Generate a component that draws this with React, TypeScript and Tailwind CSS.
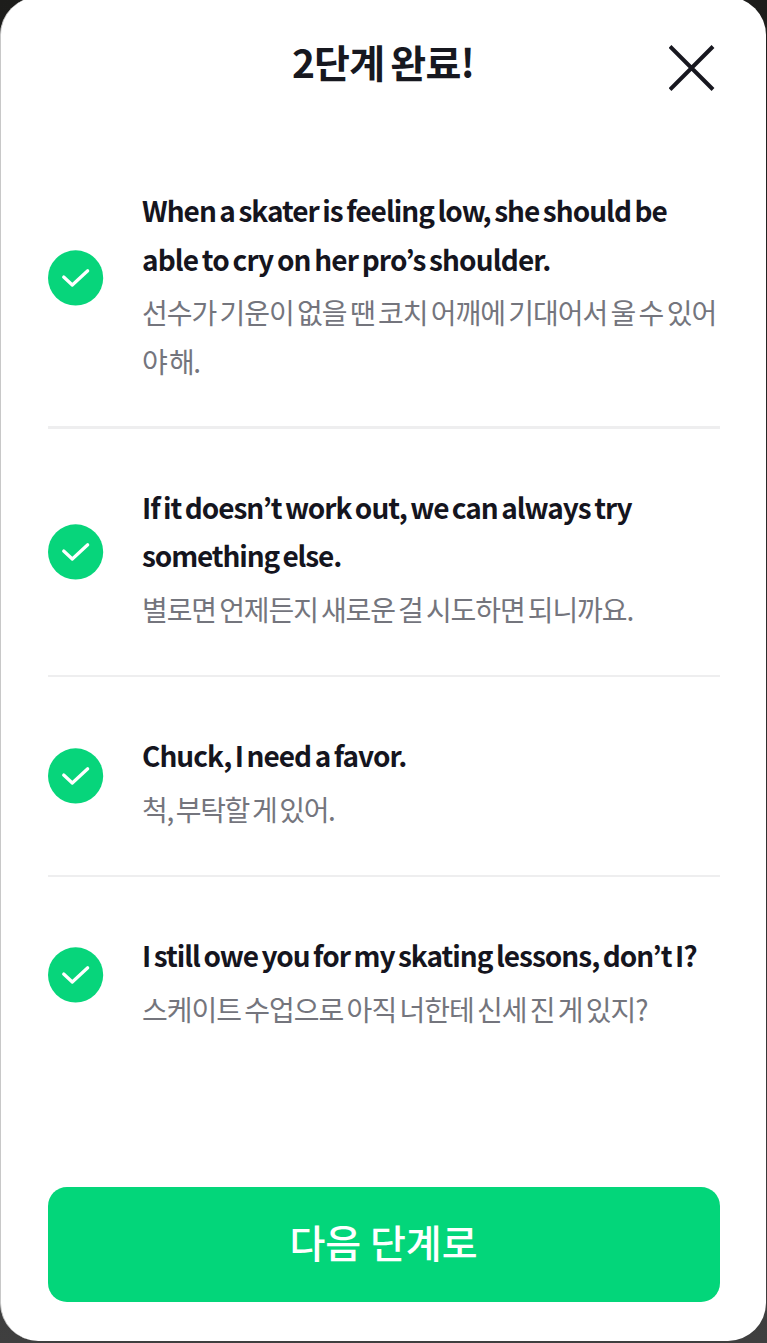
type Sentence = {
  english: { text: string; className: string }[];
  korean: { text: string; className: string }[];
  className: string;
  textClassName: string;
};

const sentences: Sentence[] = [
  {
    english: [
      { text: 'When a skater is feeling low, she should be', className: 'tracking-[-0.97px]' },
      { text: 'able to cry on her pro’s shoulder.', className: 'tracking-[-0.86px]' },
    ],
    korean: [
      { text: '선수가 기운이 없을 땐 코치 어깨에 기대어서 울 수 있어', className: 'tracking-[-1px]' },
      { text: '야 해.', className: 'tracking-[-1.5px]' },
    ],
    className: 'h-[299px] border-b-[3px]',
    textClassName: 'pt-[15px]',
  },
  {
    english: [
      { text: 'If it doesn’t work out, we can always try', className: 'tracking-[-1.02px]' },
      { text: 'something else.', className: 'tracking-[-1.12px]' },
    ],
    korean: [{ text: '별로면 언제든지 새로운 걸 시도하면 되니까요.', className: 'tracking-[-1.1px]' }],
    className: 'h-[248px] border-b-[2px]',
    textClassName: 'pt-[12px]',
  },
  {
    english: [{ text: 'Chuck, I need a favor.', className: 'tracking-[-0.97px]' }],
    korean: [{ text: '척, 부탁할 게 있어.', className: 'tracking-[-1.35px]' }],
    className: 'h-[200px] border-b-[2px]',
    textClassName: 'pt-[12px]',
  },
  {
    english: [{ text: 'I still owe you for my skating lessons, don’t I?', className: 'tracking-[-0.99px]' }],
    korean: [{ text: '스케이트 수업으로 아직 너한테 신세 진 게 있지?', className: 'tracking-[-1px]' }],
    className: 'h-[195px]',
    textClassName: 'pt-[15px]',
  },
];

function CheckBadge() {
  return (
    <svg className="size-[56px] shrink-0" viewBox="0 0 56 56" fill="none" aria-hidden="true">
      <circle cx="27.6" cy="27.9" r="27.6" fill="#07d57b" />
      <path d="M15.7 27 L24.3 35 L39.7 20.8" stroke="#fff" strokeWidth="3.2" strokeLinecap="round" strokeLinejoin="round" />
    </svg>
  );
}

function SentenceRow({ english, korean, className, textClassName }: Sentence) {
  return (
    <li className={`flex items-center border-[#eeeeef] ${className}`}>
      <CheckBadge />
      <div className={`ml-[38px] whitespace-nowrap ${textClassName}`}>
        <p className="text-[28px] leading-[48.5px] font-bold text-[#15151e] [word-spacing:-1.9px]">
          {english.map((line) => (
            <span key={line.text} className={`block ${line.className}`}>{line.text}</span>
          ))}
        </p>
        <p className="mt-[5px] text-[28px] leading-[48.5px] text-[#74757d] [word-spacing:-2px]">
          {korean.map((line) => (
            <span key={line.text} className={`block ${line.className}`}>{line.text}</span>
          ))}
        </p>
      </div>
    </li>
  );
}

export default function App() {
  return (
    <div className="h-[1343px] w-[767px] overflow-hidden bg-linear-to-b from-[#1d1d1b] to-[#3f3f3f] pr-px pb-[2px] font-['Noto_Sans_CJK_KR',sans-serif]">
      <main className="-mt-[3px] flex h-[1344px] flex-col rounded-[38px] border-l border-[#c8c8c8] bg-white pr-[46px] pl-[47px]">
        <header className="flex h-[133px] items-start justify-between">
          <span className="w-[46px]" />
          <h1 className="mt-[36px] ml-[3px] text-[39px] leading-[56px] font-bold tracking-[-0.8px] text-[#17181f] [word-spacing:-2px]">2단계 완료!</h1>
          <button className="mt-[48px] mr-[5px]" aria-label="닫기">
            <svg className="size-[46px]" viewBox="0 0 46 46" fill="none" stroke="#17171f" strokeWidth="4">
              <path d="M1 1.5 L44 44.5 M44 1.5 L1 44.5" />
            </svg>
          </button>
        </header>
        <ul>
          {sentences.map((sentence) => (
            <SentenceRow key={sentence.english[0].text} {...sentence} />
          ))}
        </ul>
        <button className="mt-auto mb-[39px] h-[115px] w-full shrink-0 rounded-[19px] bg-[#03d67a] pr-px pb-[6px] text-[39px] font-medium text-white">
          다음 단계로
        </button>
      </main>
    </div>
  );
}
